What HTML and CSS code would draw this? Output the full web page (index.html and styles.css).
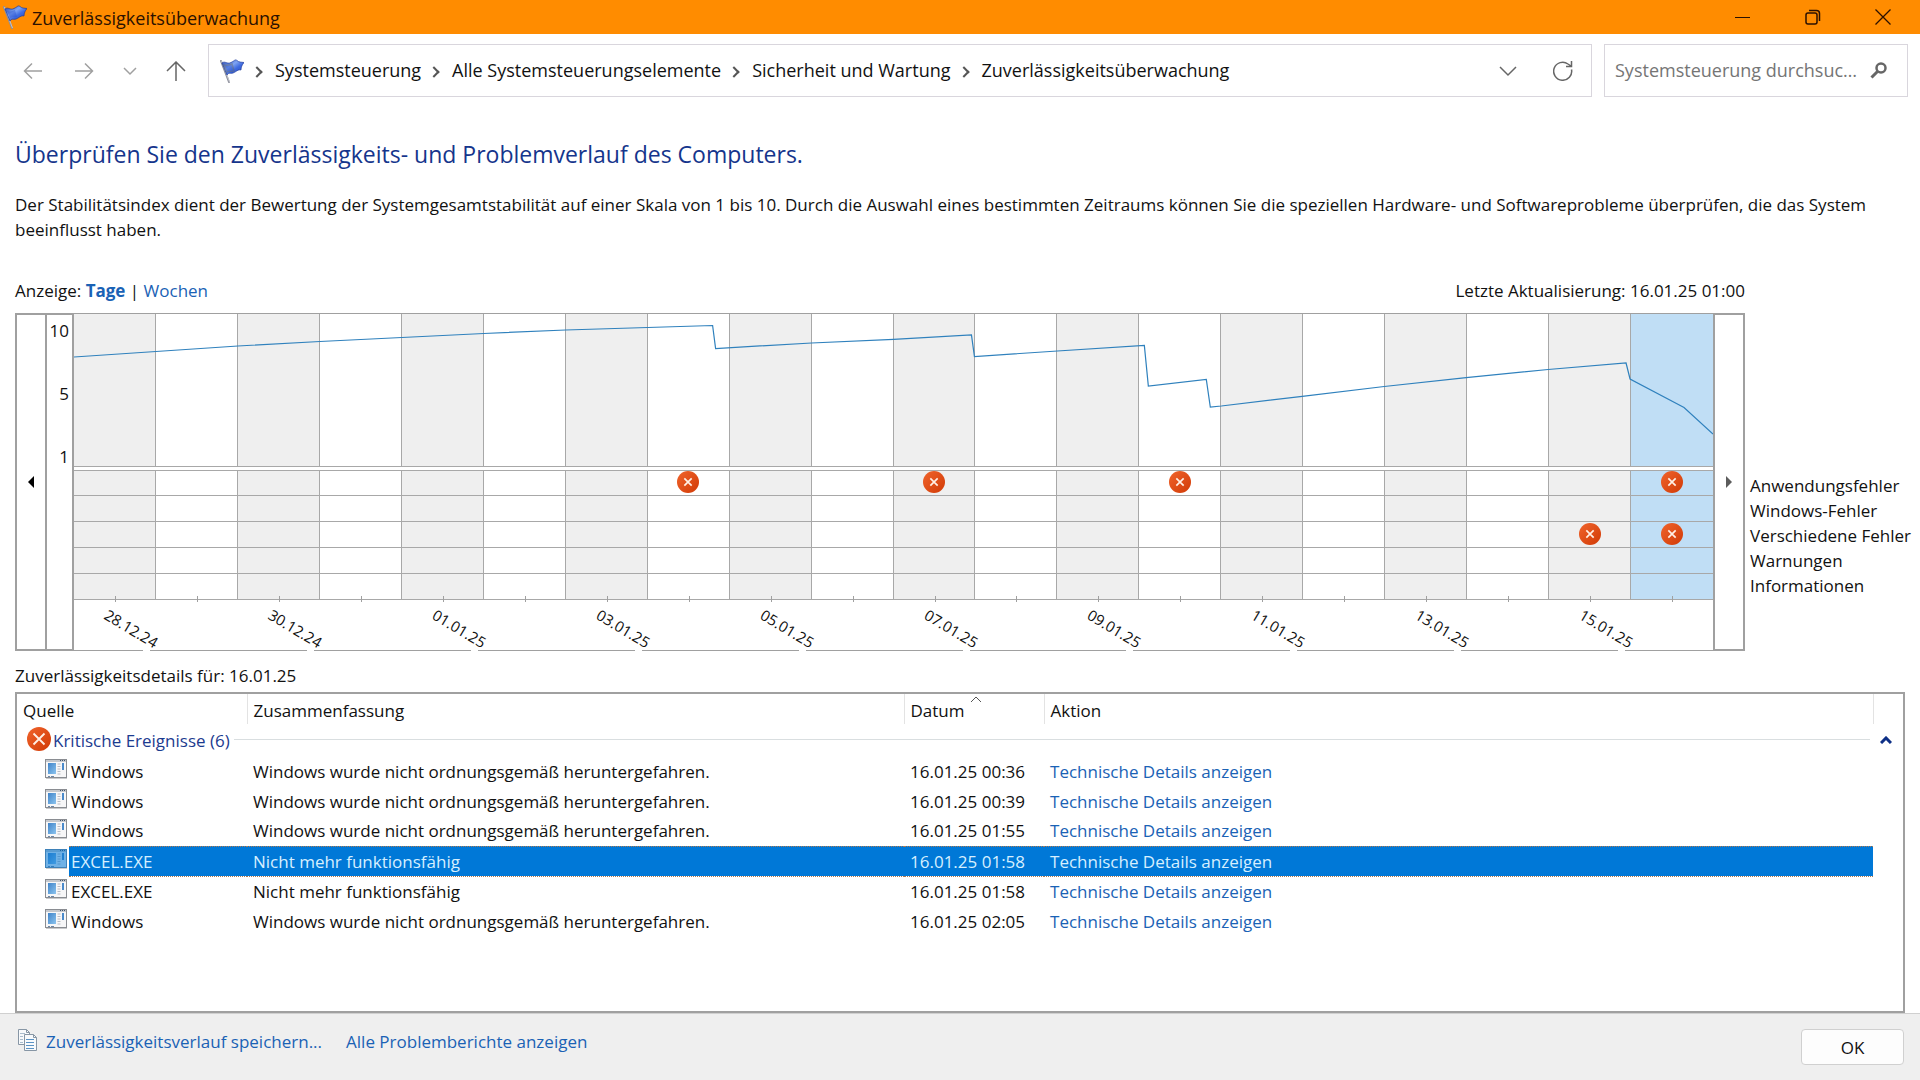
FILE: index.html
```html
<!DOCTYPE html>
<html lang="de">
<head>
<meta charset="utf-8">
<meta name="viewport" content="width=device-width, initial-scale=1">
<title>Zuverlässigkeitsüberwachung</title>
<link rel="stylesheet" href="styles.css">
</head>
<body>
<svg class="defs" aria-hidden="true">
  <defs>
    <linearGradient id="cloth" x1="0" y1="0" x2="1" y2="1">
      <stop offset="0" stop-color="#1c3fae"/><stop offset=".4" stop-color="#7fa4f2"/><stop offset=".6" stop-color="#3f6be0"/><stop offset="1" stop-color="#2347c0"/>
    </linearGradient>
    <linearGradient id="red" x1="0" y1="0" x2="1" y2="1">
      <stop offset="0" stop-color="#f0642c"/><stop offset="1" stop-color="#d13a06"/>
    </linearGradient>
    <linearGradient id="pane" x1="0" y1="0" x2="1" y2="1">
      <stop offset="0" stop-color="#3f83c9"/><stop offset="1" stop-color="#8cc4ee"/>
    </linearGradient>
    <symbol id="flag" viewBox="0 0 24 24">
      <path d="M1 2 9 23" stroke="#8d8f9a" stroke-width="2" stroke-linecap="round"/>
      <path d="M1.500 2 9.500 23" stroke="#d6d8e0" stroke-width=".7"/>
      <path d="M2 4C5 1.500 7 5.500 11 3.500S15 0 17 1.500C19 3.500 21 3 24 3.500 22 6 21 8 21 11 18 10 16 13 13 14S9 13 7 16Z" fill="url(#cloth)" stroke="#1d3a9c" stroke-width=".7"/>
      <path d="M4 6C8 7 9 6 12 5L14 12C11 12.500 9 11.500 7 13Z" fill="#2c55cf" opacity=".45"/>
    </symbol>
    <symbol id="error" viewBox="0 0 24 24">
      <circle cx="12" cy="12" r="12" fill="url(#red)"/>
      <path d="M8 8l8 8M16 8l-8 8" stroke="#fff0e6" stroke-width="1.800"/>
    </symbol>
    <symbol id="error-large" viewBox="0 0 24 24">
      <circle cx="12" cy="12" r="12" fill="url(#red)"/>
      <path d="M6.500 6.500l11 11M17.500 6.500l-11 11" stroke="#fff0e6" stroke-width="1.800"/>
    </symbol>
    <symbol id="app" viewBox="0 0 22 20">
      <rect x=".5" y=".5" width="21" height="18" fill="#f7f7f8" stroke="#8a8d92"/>
      <path d="M1 19.500h21" stroke="#c9cacc"/>
      <path d="M1 2h20" stroke="#c5c8cd" stroke-width="2"/>
      <path d="M15 1.500h1M17 1.500h1M19 1.500h1" stroke="#44566e"/>
      <rect x="3" y="4" width="8" height="11" fill="url(#pane)"/>
      <path d="M12.500 5h3M12.500 7.500h3M12.500 10h3M12.500 12.500h3M12.500 15h3" stroke="#b9bcc4"/>
      <rect x="17" y="4" width="2" height="7" fill="#4a8acb"/>
      <path d="M3 17.500h2M6 17.500h3" stroke="#6d86a5"/>
    </symbol>
  </defs>
</svg>

<header class="titlebar">
  <svg class="icon24"><use href="#flag"/></svg>
  <span class="title">Zuverlässigkeitsüberwachung</span>
  <button class="winbtn" aria-label="Minimieren"><svg width="16" height="16"><path d="M0 8.500h15"/></svg></button>
  <button class="winbtn" aria-label="Verkleinern"><svg width="16" height="16"><rect x="1" y="4" width="11" height="11" rx="2" stroke-width="1.500"/><path d="M4 1.500h7.500a3 3 0 0 1 3 3V12" stroke-width="1.500"/></svg></button>
  <button class="winbtn" aria-label="Schließen"><svg width="16" height="16"><path d="M.5.500l15 15M15.500.500l-15 15" stroke-width="1.300"/></svg></button>
</header>

<nav class="toolbar" aria-label="Navigation">
  <div class="arrows">
    <button aria-label="Zurück" disabled><svg width="20" height="20"><path d="M19 10H2M9 2.500 1.500 10 9 17.500"/></svg></button>
    <button aria-label="Vorwärts" disabled><svg width="20" height="20"><path d="M1 10h17M11 2.500l7.500 7.500-7.500 7.500"/></svg></button>
    <button aria-label="Zuletzt besuchte Orte" class="dim"><svg width="14" height="20"><path d="M1 7l6 6 6-6"/></svg></button>
    <button aria-label="Nach oben"><svg width="20" height="20"><path d="M10 20V1.500M1 10l9-9 9 9"/></svg></button>
  </div>
  <div class="address">
    <svg class="icon24"><use href="#flag"/></svg>
    <ol class="crumbs">
      <li><a href="#">Systemsteuerung</a></li>
      <li><a href="#">Alle Systemsteuerungselemente</a></li>
      <li><a href="#">Sicherheit und Wartung</a></li>
      <li><a href="#">Zuverlässigkeitsüberwachung</a></li>
    </ol>
    <button aria-label="Verlauf"><svg width="18" height="18"><path d="M1 5l8 8 8-8"/></svg></button>
    <button aria-label="Aktualisieren"><svg width="20" height="20"><path d="M18.500 8.500a9 9 0 1 1-3.500-5.500l3 2M18.500 0v5.500H13"/></svg></button>
  </div>
  <div class="search">
    <input type="text" aria-label="Suchen" placeholder="Systemsteuerung durchsuchen">
    <button aria-label="Suche starten"><svg width="17" height="17"><circle cx="11" cy="6" r="4.500" stroke-width="2.500"/><path d="M7.500 9.500 1.500 15.500" stroke-width="3"/></svg></button>
  </div>
</nav>

<main>
  <h1>Überprüfen Sie den Zuverlässigkeits- und Problemverlauf des Computers.</h1>
  <p class="intro">Der Stabilitätsindex dient der Bewertung der Systemgesamtstabilität auf einer Skala von 1 bis 10. Durch die Auswahl eines bestimmten Zeitraums können Sie die speziellen Hardware- und Softwareprobleme überprüfen, die das System beeinflusst haben.</p>

  <div class="report">
    <div class="viewbar">
      <span>Anzeige: <a href="#" class="current">Tage</a> | <a href="#">Wochen</a></span>
      <span>Letzte Aktualisierung: 16.01.25 01:00</span>
    </div>
    <div class="chart">
      <button class="scroll" aria-label="Frühere Tage"><svg width="6" height="12"><path d="M6 0v12L0 6z"/></svg></button>
      <div class="scale"><span>10</span><span>5</span><span>1</span></div>
      <div class="plot">
        <div class="day"><div class="idx"></div><i></i><i></i><i></i><i></i><i></i><div class="tick"><time>28.12.24</time></div></div>
        <div class="day"><div class="idx"></div><i></i><i></i><i></i><i></i><i></i><div class="tick"></div></div>
        <div class="day"><div class="idx"></div><i></i><i></i><i></i><i></i><i></i><div class="tick"><time>30.12.24</time></div></div>
        <div class="day"><div class="idx"></div><i></i><i></i><i></i><i></i><i></i><div class="tick"></div></div>
        <div class="day"><div class="idx"></div><i></i><i></i><i></i><i></i><i></i><div class="tick"><time>01.01.25</time></div></div>
        <div class="day"><div class="idx"></div><i></i><i></i><i></i><i></i><i></i><div class="tick"></div></div>
        <div class="day"><div class="idx"></div><i></i><i></i><i></i><i></i><i></i><div class="tick"><time>03.01.25</time></div></div>
        <div class="day"><div class="idx"></div><i><svg><use href="#error"/></svg></i><i></i><i></i><i></i><i></i><div class="tick"></div></div>
        <div class="day"><div class="idx"></div><i></i><i></i><i></i><i></i><i></i><div class="tick"><time>05.01.25</time></div></div>
        <div class="day"><div class="idx"></div><i></i><i></i><i></i><i></i><i></i><div class="tick"></div></div>
        <div class="day"><div class="idx"></div><i><svg><use href="#error"/></svg></i><i></i><i></i><i></i><i></i><div class="tick"><time>07.01.25</time></div></div>
        <div class="day"><div class="idx"></div><i></i><i></i><i></i><i></i><i></i><div class="tick"></div></div>
        <div class="day"><div class="idx"></div><i></i><i></i><i></i><i></i><i></i><div class="tick"><time>09.01.25</time></div></div>
        <div class="day"><div class="idx"></div><i><svg><use href="#error"/></svg></i><i></i><i></i><i></i><i></i><div class="tick"></div></div>
        <div class="day"><div class="idx"></div><i></i><i></i><i></i><i></i><i></i><div class="tick"><time>11.01.25</time></div></div>
        <div class="day"><div class="idx"></div><i></i><i></i><i></i><i></i><i></i><div class="tick"></div></div>
        <div class="day"><div class="idx"></div><i></i><i></i><i></i><i></i><i></i><div class="tick"><time>13.01.25</time></div></div>
        <div class="day"><div class="idx"></div><i></i><i></i><i></i><i></i><i></i><div class="tick"></div></div>
        <div class="day"><div class="idx"></div><i></i><i></i><i><svg><use href="#error"/></svg></i><i></i><i></i><div class="tick"><time>15.01.25</time></div></div>
        <div class="day selected"><div class="idx"></div><i><svg><use href="#error"/></svg></i><i></i><i><svg><use href="#error"/></svg></i><i></i><i></i><div class="tick"></div></div>
        <svg class="curve" viewBox="0 0 1640 153" preserveAspectRatio="none" role="img" aria-label="Stabilitätsindex">
          <polyline vector-effect="non-scaling-stroke" points="0,43 82,37.500 164,32 246,27.500 328,23.500 410,19.500 492,16 574,13.500 639,11.500 642,34.500 738,29 820,25.300 898,21 901,42.500 984,37 1071,31.500 1075,72 1133,65.500 1137,93 1148,92 1229,82.300 1311,72.500 1393,63.600 1475,55.500 1553,49 1557,65 1611,93.500 1640,120"/>
        </svg>
      </div>
      <button class="scroll later" aria-label="Spätere Tage"><svg width="6" height="12"><path d="M0 0v12l6-6z"/></svg></button>
    </div>
    <ul class="legend">
      <li>Anwendungsfehler</li><li>Windows-Fehler</li><li>Verschiedene Fehler</li><li>Warnungen</li><li>Informationen</li>
    </ul>
  </div>

  <h2>Zuverlässigkeitsdetails für: 16.01.25</h2>
  <div class="list">
    <table>
      <colgroup><col class="c-icon"><col class="c-source"><col class="c-summary"><col class="c-date"><col><col class="c-gutter"></colgroup>
      <thead>
        <tr><th colspan="2">Quelle</th><th>Zusammenfassung</th><th class="sorted">Datum<svg width="12" height="7"><path d="M1 6l5-5 5 5"/></svg></th><th>Aktion</th><td></td></tr>
      </thead>
      <tbody>
        <tr class="group"><td colspan="5"><div><svg class="icon24"><use href="#error-large"/></svg><span>Kritische Ereignisse (6)</span></div></td><td><button aria-label="Gruppe reduzieren"><svg width="12" height="8"><path d="M1 7l5-5 5 5"/></svg></button></td></tr>
        <tr><td><svg class="app"><use href="#app"/></svg></td><td>Windows</td><td>Windows wurde nicht ordnungsgemäß heruntergefahren.</td><td>16.01.25 00:36</td><td><a href="#">Technische Details anzeigen</a></td><td></td></tr>
        <tr><td><svg class="app"><use href="#app"/></svg></td><td>Windows</td><td>Windows wurde nicht ordnungsgemäß heruntergefahren.</td><td>16.01.25 00:39</td><td><a href="#">Technische Details anzeigen</a></td><td></td></tr>
        <tr><td><svg class="app"><use href="#app"/></svg></td><td>Windows</td><td>Windows wurde nicht ordnungsgemäß heruntergefahren.</td><td>16.01.25 01:55</td><td><a href="#">Technische Details anzeigen</a></td><td></td></tr>
        <tr class="active"><td><svg class="app"><use href="#app"/><rect width="22" height="19" fill="#0078d7" opacity=".55"/></svg></td><td>EXCEL.EXE</td><td>Nicht mehr funktionsfähig</td><td>16.01.25 01:58</td><td><a href="#">Technische Details anzeigen</a></td><td></td></tr>
        <tr><td><svg class="app"><use href="#app"/></svg></td><td>EXCEL.EXE</td><td>Nicht mehr funktionsfähig</td><td>16.01.25 01:58</td><td><a href="#">Technische Details anzeigen</a></td><td></td></tr>
        <tr><td><svg class="app"><use href="#app"/></svg></td><td>Windows</td><td>Windows wurde nicht ordnungsgemäß heruntergefahren.</td><td>16.01.25 02:05</td><td><a href="#">Technische Details anzeigen</a></td><td></td></tr>
      </tbody>
    </table>
  </div>
</main>

<footer>
  <svg class="copy" width="20" height="22"><g fill="#f8fafc" stroke="#8796a5"><path d="M.5.500h8l3 3v12H.500z"/><path d="M6.500 5.500h9l3 3v13h-12z"/></g><path d="M8.500.500v3h3M15.500 5.500v3h3" fill="none" stroke="#8796a5"/><path d="M2 4.500h5M2 7.500h3M2 10.500h3M2 13.500h3" stroke="#a9bccd"/><path d="M8 10.500h8M8 13.500h8M8 16.500h8M8 19.500h8" stroke="#5b93c5"/></svg>
  <a href="#">Zuverlässigkeitsverlauf speichern...</a>
  <a href="#">Alle Problemberichte anzeigen</a>
  <button class="ok">OK</button>
</footer>
</body>
</html>
```
FILE: styles.css
```css
* { box-sizing: border-box; }

body {
  margin: 0;
  min-height: 100vh;
  display: flex;
  flex-direction: column;
  background: #fff;
  color: #111;
  font: 17px/25px "Open Sans", "Noto Sans", sans-serif;
}

button {
  padding: 0;
  border: 0;
  background: none;
  font: inherit;
  color: inherit;
  display: flex;
  align-items: center;
  justify-content: center;
}

a { color: #1a62b5; text-decoration: none; }
svg { display: block; flex: none; }
.defs { position: absolute; width: 0; height: 0; }
.icon24 { width: 24px; height: 24px; }

/* Title bar */
.titlebar {
  display: flex;
  align-items: center;
  height: 34px;
  padding: 0 2px 0 3px;
  background: #ff8c00;
  color: #2b1100;
  font-size: 18px;
}
.title { flex: 1; padding-left: 5px; padding-top: 2px; }
.winbtn { width: 70px; height: 34px; }
.winbtn svg { fill: none; stroke: #2b1100; }

/* Navigation bar */
.toolbar {
  display: flex;
  gap: 12px;
  padding: 10px 12px 0 22px;
  font-size: 18px;
}
.toolbar svg { fill: none; stroke: #666; stroke-width: 1.5; }
.arrows { display: flex; gap: 29px; width: 174px; }
.arrows button { width: 22px; }
.arrows .dim { width: 12px; }
.arrows :disabled svg, .arrows .dim svg { stroke: #a0a0a0; }
.address, .search {
  display: flex;
  align-items: center;
  height: 53px;
  border: 1px solid #d9d6dd;
}
.address { flex: 1; gap: 36px; padding: 0 18px 0 11px; }
.crumbs {
  flex: 1;
  display: flex;
  margin: 0 0 0 -36px;
  padding: 0;
  list-style: none;
}
.crumbs li { display: flex; align-items: center; }
.crumbs a { color: #111; }
.crumbs li::before {
  content: "";
  width: 6px;
  height: 6px;
  margin: 2px 14px 0 9px;
  border: solid #555;
  border-width: 2px 2px 0 0;
  transform: rotate(45deg);
}
.search { width: 304px; padding: 0 20px 0 10px; gap: 10px; }
.search input {
  flex: 1;
  min-width: 0;
  padding: 0;
  border: 0;
  outline: 0;
  background: none;
  font: inherit;
  color: #111;
  text-overflow: ellipsis;
}
.search input::placeholder { color: #757575; }

/* Content */
main {
  flex: 1;
  display: flex;
  flex-direction: column;
  padding: 40px 15px 0;
}
h1 { margin: 0; font-size: 23px; line-height: 35px; font-weight: 400; color: #15358c; }
.intro { margin: 20px 0 36px; padding-right: 16px; }
h2 { margin: 12px 0 4px; font-size: 17px; line-height: 25px; font-weight: 400; }

.report {
  display: grid;
  grid-template-columns: minmax(0, 1fr) 160px;
  grid-template-rows: 35px auto;
}
.viewbar { display: flex; justify-content: space-between; }
.viewbar .current { font-weight: 700; }
.legend {
  grid-column: 2;
  grid-row: 2;
  margin: 0 -10px 0 0;
  padding: 160px 0 0 5px;
  list-style: none;
  white-space: nowrap;
}

/* Chart */
.chart { grid-column: 1; grid-row: 2; display: flex; height: 338px; }
.scroll { width: 32px; border: 2px solid #a0a0a0; }
.scroll.later svg { fill: #5c5c5c; }
.scale {
  display: flex;
  flex-direction: column;
  gap: 38px;
  width: 27px;
  padding: 3px 3px 0 0;
  border: solid #a0a0a0;
  border-width: 2px 2px 2px 0;
  text-align: right;
}
.plot {
  position: relative;
  flex: 1;
  display: flex;
  border: solid #a0a0a0;
  border-width: 1px 0;
}
.curve { position: absolute; left: 0; top: 0; width: 100%; height: 153px; }
.curve polyline { fill: none; stroke: #2f81bd; stroke-width: 1.2; }
.day { flex: 1; min-width: 0; --fill: #fff; --line: #a8a8a8; }
.day:nth-child(odd) { --fill: #efefef; }
.day.selected { --fill: #c0def5; }
.day.selected > * { border-right: 0; }
.idx {
  height: 153px;
  margin-bottom: 3px;
  background: var(--fill);
  border: solid var(--line);
  border-width: 0 1px 1px 0;
}
.day i {
  display: flex;
  justify-content: center;
  height: 26px;
  padding-top: 1px;
  background: var(--fill);
  border: solid var(--line);
  border-width: 0 1px 1px 0;
}
.idx + i { border-top-width: 1px; padding-top: 0; }
.day i svg { width: 22px; height: 22px; }
.tick { position: relative; height: 50px; }
.tick::before {
  content: "";
  position: absolute;
  left: 50%;
  top: -4px;
  height: 6px;
  border-left: 1px solid #a0a0a0;
}
.tick time {
  position: absolute;
  left: calc(50% - 9px);
  top: 3px;
  font-size: 15px;
  line-height: 20px;
  transform: rotate(31deg);
  transform-origin: 0 50%;
}
.tick:has(time)::after {
  content: "";
  position: absolute;
  left: calc(50% + 28px);
  bottom: -1px;
  width: 7px;
  height: 1px;
  background: #fff;
}

/* Event list */
.list { flex: 1; border: 2px solid #a0a0a0; }
table { width: 100%; border-collapse: collapse; table-layout: fixed; }
.c-icon { width: 52px; }
.c-source { width: 178px; }
.c-summary { width: 657px; }
.c-date { width: 140px; }
.c-gutter { width: 30px; }
th {
  position: relative;
  height: 30px;
  padding: 2px 6px 0;
  border-right: 1px solid #e3e3e3;
  font-weight: 400;
  text-align: left;
}
.sorted svg { position: absolute; left: 65px; top: 2px; fill: none; stroke: #555; }
td { height: 30px; padding: 0 6px; white-space: nowrap; }
td:nth-child(2) { padding-left: 2px; }
td:first-child { padding: 0 0 4px 28px; }
.app { width: 22px; height: 20px; }
.group td:first-child { height: 32px; padding: 0 3px 2px 6px; }
.group div { display: flex; align-items: center; padding-left: 4px; color: #1c3b8f; }
.group span { padding: 2px 4px 0 2px; }
.group div::after { content: ""; flex: 1; border-top: 1px solid #d9dee0; }
.group button svg { fill: none; stroke: #0d2f86; stroke-width: 3; }
.group td:last-child { padding-left: 7px; }
.active td:not(:first-child):not(:last-child) {
  background: #0078d7;
  border: dotted #b07a50;
  border-width: 1px 0;
  color: #d6efff;
}
.active a { color: #d6efff; }

/* Footer */
footer {
  display: flex;
  align-items: flex-start;
  height: 67px;
  padding: 15px 16px 0 18px;
  background: #efefef;
  border-top: 1px solid #d0d0d0;
}
footer a { margin-right: 24px; }
.copy { margin-right: 8px; }
.ok {
  width: 103px;
  height: 36px;
  margin-left: auto;
  border: 1px solid #d0d0d0;
  border-radius: 4px;
  background: #fdfdfd;
}
```
